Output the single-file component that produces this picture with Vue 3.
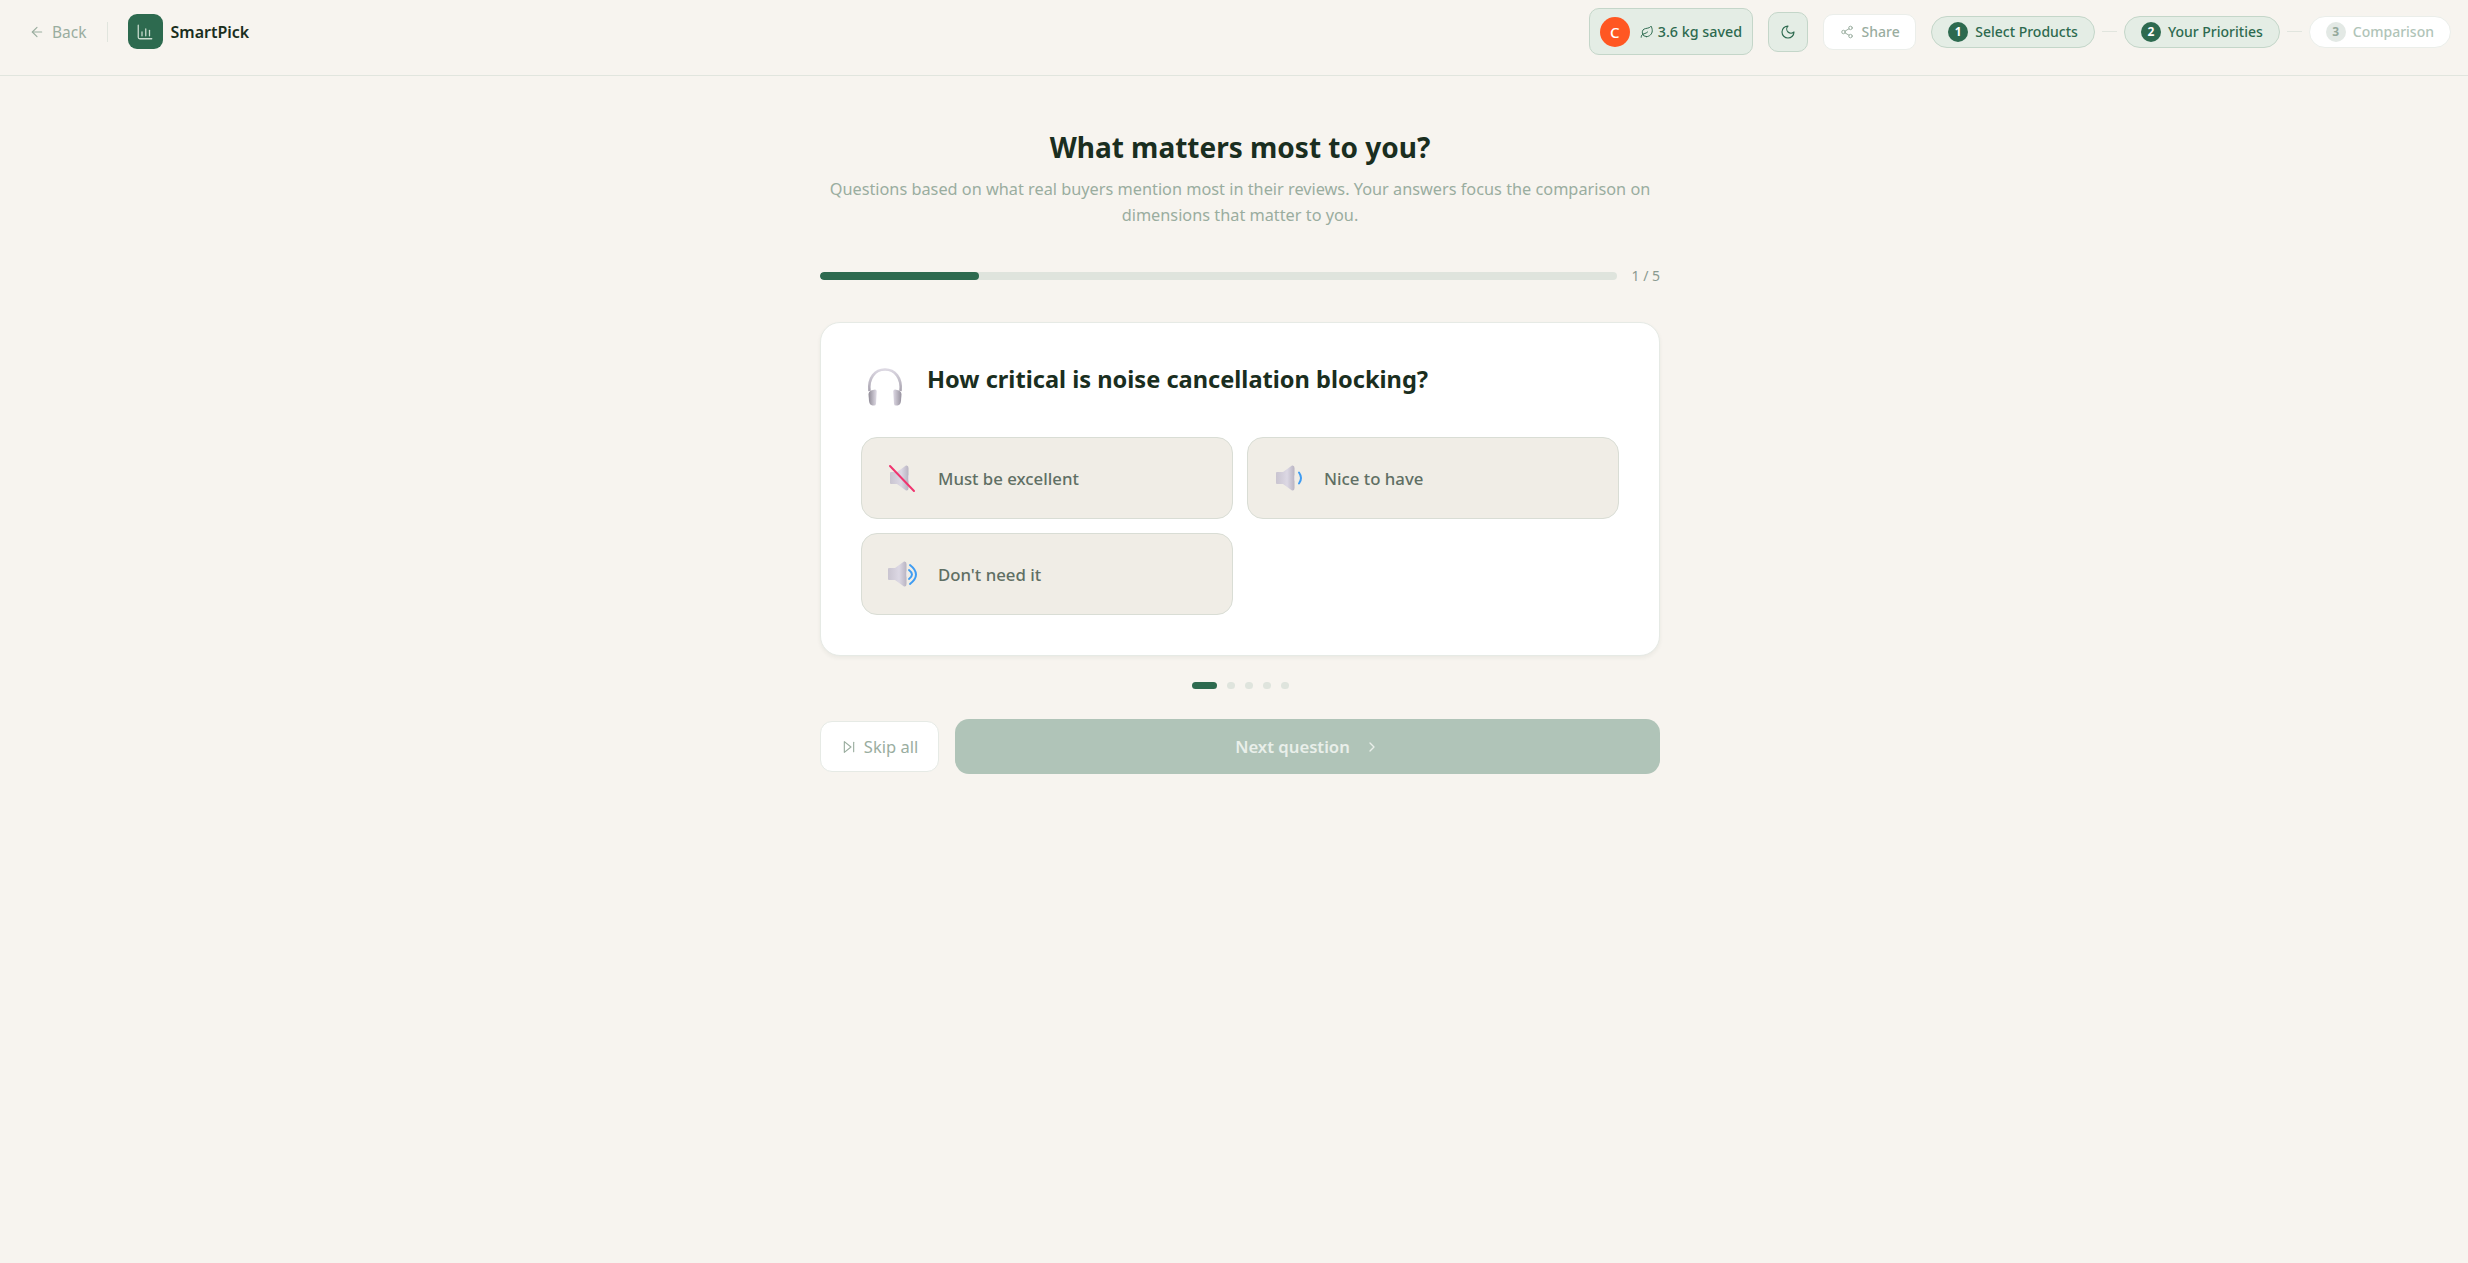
<script setup>
import { ref } from 'vue';

const current = ref(0);
const total = 5;
const steps = [
  { n: 1, label: 'Select Products', state: 'done' },
  { n: 2, label: 'Your Priorities', state: 'done' },
  { n: 3, label: 'Comparison', state: 'todo' }
];
const options = [
  { label: 'Must be excellent', icon: 'mute' },
  { label: 'Nice to have', icon: 'low' },
  { label: "Don't need it", icon: 'high' }
];
</script>

<template>
  <div class="page">
    <header class="topbar">
      <div class="left">
        <button class="back">
          <svg class="ic thin" width="16" height="16" viewBox="0 0 24 24"><path d="m12 19-7-7 7-7" /><path d="M19 12H5" /></svg>
          Back
        </button>
        <span class="vline"></span>
        <div class="logo">
          <svg class="ic thin" width="18" height="18" viewBox="0 0 24 24"><path d="M3 3v16a2 2 0 0 0 2 2h16" /><path d="M8 17v-5" /><path d="M13 17V8" /><path d="M18 17v-7" /></svg>
        </div>
        <span class="brand">SmartPick</span>
      </div>
      <div class="right">
        <div class="saved">
          <span class="avatar">C</span>
          <svg class="ic thin" width="14" height="14" viewBox="0 0 24 24"><path d="M11 20A7 7 0 0 1 9.8 6.1C15.5 5 17 4.48 19 2c1 2 2 4.18 2 8 0 5.5-4.78 10-10 10Z" /><path d="M2 21c0-3 1.85-5.36 5.08-6C9.5 14.52 12 13 13 12" /></svg>
          <span>3.6 kg saved</span>
        </div>
        <button class="moon">
          <svg class="ic thin" width="16" height="16" viewBox="0 0 24 24"><path d="M12 3a6 6 0 0 0 9 9 9 9 0 1 1-9-9Z" /></svg>
        </button>
        <button class="share">
          <svg class="ic thin" width="14" height="14" viewBox="0 0 24 24"><circle cx="18" cy="5" r="3" /><circle cx="6" cy="12" r="3" /><circle cx="18" cy="19" r="3" /><path d="m8.6 13.5 6.8 4" /><path d="m15.4 6.5-6.800 4" /></svg>
          Share
        </button>
        <nav class="steps">
          <template v-for="(s, i) in steps" :key="s.n">
            <span v-if="i > 0" class="dash"></span>
            <span class="step" :class="s.state">
              <span class="num">{{ s.n }}</span>{{ s.label }}
            </span>
          </template>
        </nav>
      </div>
    </header>

    <div class="content">
      <main class="main">
        <h1>What matters most to you?</h1>
        <p class="sub">Questions based on what real buyers mention most in their reviews. Your answers focus the comparison on dimensions that matter to you.</p>

        <div class="progress">
          <div class="track"><div class="fill" :style="{ width: ((current + 1) / total) * 100 + '%' }"></div></div>
          <span class="count">{{ current + 1 }} / {{ total }}</span>
        </div>

        <section class="card">
          <div class="question">
            <svg class="emoji" width="44" height="44" viewBox="0 0 44 44">
              <defs>
                <linearGradient id="band" x1="0" y1="0" x2="0" y2="1"><stop offset="0" stop-color="#dcd8e2" /><stop offset="1" stop-color="#a9a4b0" /></linearGradient>
                <linearGradient id="cup" x1="0" y1="0" x2="1" y2="0"><stop offset="0" stop-color="#8f8a96" /><stop offset="1" stop-color="#e2dee8" /></linearGradient>
                <linearGradient id="cup2" x1="0" y1="0" x2="1" y2="0"><stop offset="0" stop-color="#ded9e4" /><stop offset="1" stop-color="#96919e" /></linearGradient>
              </defs>
              <path d="M6.500 27 C5 14 12 5.500 22 5.500 C32 5.500 39 14 37.500 27" fill="none" stroke="url(#band)" stroke-width="2.600" />
              <path d="M8 26.500 L12 25.500 Q13.500 25.500 13.800 27 L13 40 Q12.800 41.500 11 41.500 L9.500 41.500 Q6.500 41 6 37 L5.500 30 Q5.500 27.500 8 26.500Z" fill="url(#cup)" />
              <path d="M36 26.500 L32 25.500 Q30.500 25.500 30.200 27 L31 40 Q31.200 41.500 33 41.500 L34.500 41.500 Q37.500 41 38 37 L38.500 30 Q38.500 27.500 36 26.500Z" fill="url(#cup2)" />
            </svg>
            <h2>How critical is noise cancellation blocking?</h2>
          </div>

          <div class="options">
            <button v-for="o in options" :key="o.label" class="option">
              <svg class="spk" width="34" height="30" viewBox="0 0 34 30">
                <defs>
                  <linearGradient :id="'s' + o.icon" x1="0" y1="0" x2="1" y2="0"><stop offset="0" stop-color="#c9c4d0" /><stop offset="0.6" stop-color="#dcd8e4" /><stop offset="1" stop-color="#b9b4c2" /></linearGradient>
                </defs>
                <g :transform="o.icon === 'high' ? '' : 'translate(2 0)'">
                  <path d="M2 9 H8 L17 2.500 Q19.500 2 19.500 5 V25 Q19.500 28 17 27.500 L8 21 H2 Q1 21 1 20 V10 Q1 9 2 9Z" :fill="'url(#s' + o.icon + ')'" />
                  <path d="M19.500 12 Q22 15 19.500 18" fill="#eeeaf2" />
                </g>
                <path v-if="o.icon === 'low'" d="M26 9.500 Q30 15 26 20.500" fill="none" stroke="#3f9cf2" stroke-width="2" stroke-linecap="round" />
                <template v-if="o.icon === 'high'">
                  <path d="M22 11 Q28 15.500 22 20" fill="none" stroke="#3f9cf2" stroke-width="2" stroke-linecap="round" />
                  <path d="M23 6 Q35 15.500 23 25" fill="none" stroke="#3f9cf2" stroke-width="2" stroke-linecap="round" />
                </template>
                <path v-if="o.icon === 'mute'" d="M3 3 L27 28" fill="none" stroke="#f0346f" stroke-width="2" stroke-linecap="round" />
              </svg>
              <span>{{ o.label }}</span>
            </button>
          </div>
        </section>

        <div class="dots">
          <span v-for="n in total" :key="n" class="dot" :class="{ on: n === current + 1 }"></span>
        </div>

        <div class="actions">
          <button class="skip">
            <svg class="ic thin" width="16" height="16" viewBox="0 0 24 24"><polygon points="5 4 15 12 5 20 5 4" /><line x1="19" y1="5" x2="19" y2="19" /></svg>
            Skip all
          </button>
          <button class="next" disabled>
            Next question
            <svg class="ic" width="16" height="16" viewBox="0 0 24 24"><path d="m9 18 6-6-6-6" /></svg>
          </button>
        </div>
      </main>
    </div>
  </div>
</template>

<style>
html, body { margin: 0; background: #f7f4ef; }
</style>

<style scoped>
* { box-sizing: border-box; }

.page {
  min-height: 1263px;
  background: #f7f4ef;
  font-family: "Noto Sans", "Open Sans", sans-serif;
  color: #1a2e20;
}

button {
  font-family: inherit;
  cursor: pointer;
}

.ic {
  fill: none;
  stroke: currentColor;
  stroke-width: 2;
  stroke-linecap: round;
  stroke-linejoin: round;
  flex: none;
}

.ic.thin { stroke-width: 1.7; }

/* header */
.topbar {
  height: 76px;
  display: flex;
  align-items: center;
  justify-content: space-between;
  padding: 0 17px 12px 29px;
  border-bottom: 1px solid #e1e5de;
}

.left, .right, .steps, .saved, .share, .back, .step {
  display: flex;
  align-items: center;
}

.back {
  gap: 7px;
  padding: 0;
  border: none;
  background: none;
  color: #9aad9f;
  font-size: 15.5px;
}

.vline {
  width: 1px;
  height: 20px;
  margin: 0 20px 0 20px;
  background: #e1e5de;
}

.logo {
  width: 35px;
  height: 35px;
  border-radius: 9px;
  background: #2d6a4f;
  color: #c9dccf;
  display: flex;
  align-items: center;
  justify-content: center;
}

.brand {
  margin-left: 8px;
  font-size: 16px;
  font-weight: 600;
}

.right { gap: 15px; }

.saved {
  height: 47px;
  padding: 0 10px;
  gap: 4px;
  border: 1px solid #c4d6c9;
  border-radius: 10px;
  background: #e4ede5;
  color: #2d6a4f;
  font-size: 14.3px;
  font-weight: 500;
}

.avatar {
  width: 30px;
  height: 30px;
  margin-right: 6px;
  border-radius: 50%;
  background: #ff5722;
  color: #fff;
  display: flex;
  align-items: center;
  justify-content: center;
  font-size: 15px;
}

.moon {
  width: 40px;
  height: 40px;
  padding: 0;
  border: 1px solid #c4d6c9;
  border-radius: 10px;
  background: #e4ede5;
  color: #2d6a4f;
  display: flex;
  align-items: center;
  justify-content: center;
}

.share {
  height: 36px;
  padding: 0 15.5px;
  gap: 8px;
  border: 1px solid #ebeeea;
  border-radius: 10px;
  background: #fff;
  color: #9aad9f;
  font-size: 14px;
  font-weight: 500;
}

.steps { gap: 7px; }

.dash {
  width: 15px;
  height: 1px;
  background: #e1e5de;
}

.step {
  height: 32px;
  padding: 0 16px;
  gap: 7px;
  border: 1px solid #c4d6c9;
  border-radius: 16px;
  background: #e4ede5;
  color: #2d6a4f;
  font-size: 14px;
  font-weight: 500;
}

.num {
  width: 20px;
  height: 20px;
  border-radius: 50%;
  background: #2d6a4f;
  color: #fff;
  display: flex;
  align-items: center;
  justify-content: center;
  font-size: 12px;
  font-weight: 700;
}

.step.todo {
  border-color: #ebeeea;
  background: #fff;
  color: #b0c4b8;
}

.step.todo .num {
  background: #e3e9e5;
  color: #94a89b;
}

/* content */
.content { padding-left: 12px; }

.main {
  width: 840px;
  margin: 0 auto;
  padding-top: 51px;
}

h1 {
  margin: 0;
  font-size: 28px;
  line-height: 40px;
  font-weight: 700;
  text-align: center;
}

.sub {
  margin: 10px 0 0;
  font-size: 16.3px;
  line-height: 25.5px;
  color: #9aad9f;
  text-align: center;
}

.progress {
  display: flex;
  align-items: center;
  gap: 14px;
  margin-top: 44px;
}

.track {
  flex: 1;
  height: 8px;
  border-radius: 4px;
  background: #dfe4dd;
  overflow: hidden;
}

.fill {
  height: 100%;
  border-radius: 4px;
  background: #2d6a4f;
}

.count {
  font-size: 14px;
  line-height: 8px;
  color: #8a9a8f;
}

.card {
  margin-top: 42px;
  padding: 40px;
  border: 1px solid #e6eae5;
  border-radius: 20px;
  background: #fff;
  box-shadow: 0 2px 4px rgba(30, 50, 40, 0.06);
}

.question {
  display: flex;
  align-items: flex-start;
  gap: 20px;
  height: 50px;
  margin-bottom: 24px;
}

.emoji {
  flex: none;
  margin: 1px 0 0 2px;
}

h2 {
  margin: 0;
  font-size: 23.6px;
  line-height: 32px;
  font-weight: 700;
}

.options {
  display: grid;
  grid-template-columns: 1fr 1fr;
  gap: 14px;
}

.option {
  height: 82px;
  padding: 0 25px;
  display: flex;
  align-items: center;
  gap: 17px;
  border: 1px solid #d9ddd5;
  border-radius: 16px;
  background: #f0ede6;
  color: #5f6f64;
  font-size: 16.8px;
  font-weight: 500;
  text-align: left;
}

.dots {
  display: flex;
  justify-content: center;
  gap: 10px;
  margin-top: 26px;
}

.dot {
  width: 8px;
  height: 7px;
  border-radius: 4px;
  background: #dfe4dd;
}

.dot.on {
  width: 25px;
  background: #2d6a4f;
}

.actions {
  display: flex;
  align-items: center;
  gap: 16px;
  margin-top: 30px;
}

.skip {
  width: 119px;
  height: 51px;
  display: flex;
  align-items: center;
  justify-content: center;
  gap: 7px;
  border: 1px solid #e6eae5;
  border-radius: 12px;
  background: #fff;
  color: #9aad9f;
  font-size: 16.5px;
}

.next {
  flex: 1;
  height: 55px;
  display: flex;
  align-items: center;
  justify-content: center;
  gap: 14px;
  border: none;
  border-radius: 14px;
  background: #b0c4b8;
  color: #e9efea;
  font-size: 16.7px;
  font-weight: 600;
}
</style>
